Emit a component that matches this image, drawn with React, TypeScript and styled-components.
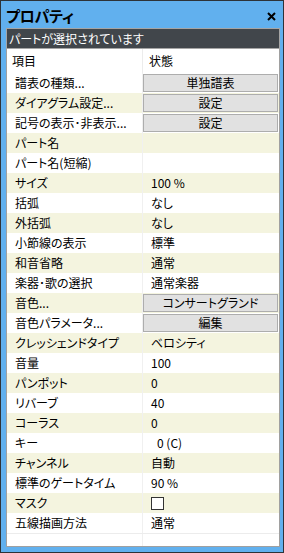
import styled, { createGlobalStyle } from 'styled-components'

const GlobalStyle = createGlobalStyle`
  html, body {
    margin: 0;
    padding: 0;
    background: #ffffff;
  }
  body {
    font-family: "Noto Sans CJK JP", "Noto Sans", sans-serif;
    font-feature-settings: "palt";
  }
`

type Prop = {
  label: string
  value?: string
  kind?: 'text' | 'button' | 'check'
  indent?: number
}

const props: Prop[] = [
  { label: '譜表の種類...', value: '単独譜表', kind: 'button' },
  { label: 'ダイアグラム設定...', value: '設定', kind: 'button' },
  { label: '記号の表示･非表示...', value: '設定', kind: 'button' },
  { label: 'パート名' },
  { label: 'パート名(短縮)' },
  { label: 'サイズ', value: '100 %' },
  { label: '括弧', value: 'なし' },
  { label: '外括弧', value: 'なし' },
  { label: '小節線の表示', value: '標準' },
  { label: '和音省略', value: '通常' },
  { label: '楽器･歌の選択', value: '通常楽器' },
  { label: '音色...', value: 'コンサートグランド', kind: 'button' },
  { label: '音色パラメータ...', value: '編集', kind: 'button' },
  { label: 'クレッシェンドタイプ', value: 'ベロシティ' },
  { label: '音量', value: '100' },
  { label: 'パンポット', value: '0' },
  { label: 'リバーブ', value: '40' },
  { label: 'コーラス', value: '0' },
  { label: 'キー', value: '0 (C)', indent: 6 },
  { label: 'チャンネル', value: '自動' },
  { label: '標準のゲートタイム', value: '90 %' },
  { label: 'マスク', kind: 'check' },
  { label: '五線描画方法', value: '通常' },
]

export default function App() {
  return (
    <>
      <GlobalStyle />
      <Window>
        <TitleBar>
          <Title>プロパティ</Title>
          <Close>
            <svg width="9" height="9" viewBox="0 0 9 9">
              <path d="M1 1 L8 8 M8 1 L1 8" stroke="#000" strokeWidth="2" />
            </svg>
          </Close>
        </TitleBar>
        <StatusBar>パートが選択されています</StatusBar>
        <Grid>
          <HeaderRow>
            <HeaderCell>項目</HeaderCell>
            <HeaderCell $right>状態</HeaderCell>
          </HeaderRow>
          {props.map((p, i) => (
            <Row key={i} $alt={i % 2 === 1}>
              <Label>{p.label}</Label>
              <Value $indent={p.indent ?? 0}>
                {p.kind === 'button' ? (
                  <CellButton>{p.value}</CellButton>
                ) : p.kind === 'check' ? (
                  <Check />
                ) : (
                  p.value
                )}
              </Value>
            </Row>
          ))}
          <EmptyRow>
            <Label />
            <Value $indent={0} />
          </EmptyRow>
        </Grid>
      </Window>
    </>
  )
}

const Window = styled.div`
  width: 284px;
  height: 553px;
  box-sizing: border-box;
  border: 1px solid #2d3338;
  background: #61b0ee;
  padding: 0 3px 5px 5px;
  display: flex;
  flex-direction: column;
  overflow: hidden;
`

const TitleBar = styled.div`
  height: 27px;
  display: flex;
  align-items: center;
  justify-content: space-between;
  padding: 0 3px 0 0;
`

const Title = styled.div`
  font-size: 15px;
  font-weight: bold;
  color: #000;
  margin-top: 1px;
  letter-spacing: -0.3px;
`

const Close = styled.div`
  width: 12px;
  height: 12px;
  display: flex;
  align-items: center;
  justify-content: center;
  margin-top: 4px;
`

const StatusBar = styled.div`
  height: 21px;
  box-sizing: border-box;
  border: 1px solid #a5a5a5;
  background: #41464b;
  color: #ffffff;
  font-size: 12px;
  line-height: 19px;
  padding-left: 2px;
  white-space: nowrap;
`

const Grid = styled.div`
  flex: 1;
  background: #ffffff;
  border-left: 1px solid #a0a0a0;
  border-right: 1px solid #a0a0a0;
  border-bottom: 1px solid #a0a0a0;
  display: flex;
  flex-direction: column;
  overflow: hidden;
`

const HeaderRow = styled.div`
  height: 24px;
  display: grid;
  grid-template-columns: 135px 1fr;
  flex-shrink: 0;
`

const HeaderCell = styled.div<{ $right?: boolean }>`
  font-size: 12px;
  line-height: 24px;
  color: #000;
  padding-left: ${(p) => (p.$right ? '6px' : '5px')};
  border-left: ${(p) => (p.$right ? '1px solid #ececec' : 'none')};
`

const Row = styled.div<{ $alt: boolean }>`
  height: 20px;
  flex-shrink: 0;
  display: grid;
  grid-template-columns: 135px 1fr;
  background: ${(p) => (p.$alt ? '#f4f4df' : '#ffffff')};
`

const EmptyRow = styled.div`
  height: 20px;
  flex-shrink: 0;
  display: grid;
  grid-template-columns: 135px 1fr;
  border-top: 1px solid #ececec;
`

const Label = styled.div`
  font-size: 12px;
  line-height: 20px;
  color: #000;
  padding-left: 8px;
  white-space: nowrap;
  overflow: hidden;
`

const Value = styled.div<{ $indent: number }>`
  font-size: 12px;
  line-height: 20px;
  color: #000;
  padding-left: ${(p) => 8 + p.$indent}px;
  border-left: 1px solid #f0f0f0;
  display: flex;
  align-items: center;
  white-space: nowrap;
`

const CellButton = styled.div`
  margin-left: -8px;
  width: 135px;
  height: 18px;
  box-sizing: border-box;
  border: 1px solid #adadad;
  background: #e1e1e1;
  font-size: 12px;
  line-height: 16px;
  text-align: center;
  color: #000;
`

const Check = styled.div`
  width: 13px;
  height: 13px;
  box-sizing: border-box;
  border: 1px solid #333333;
  background: #ffffff;
`
